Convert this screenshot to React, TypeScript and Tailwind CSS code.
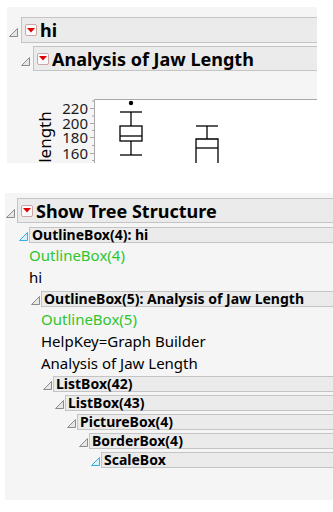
import React from "react";

const Tri = ({ blue }: { blue?: boolean }) => (
  <svg width="9" height="9" viewBox="0 0 9 9" className="shrink-0">
    <polygon
      points="8.5,0.5 8.5,8.5 0.5,8.5"
      fill={blue ? "#d9f2fd" : "#e6e6e6"}
      stroke={blue ? "#35aee2" : "#8c8c8c"}
      strokeWidth="1"
    />
  </svg>
);

const Menu = () => (
  <span className="w-[12px] h-[12px] border border-[#caa8a8] rounded-[2px] bg-[#fbfbfb] flex items-center justify-center shrink-0">
    <svg width="8" height="5" viewBox="0 0 8 5">
      <polygon points="0,0 8,0 4,4.6" fill="#e00000" />
    </svg>
  </span>
);

const TreeHeader = ({ indent, label, blue }: { indent: string; label: string; blue?: boolean }) => (
  <div className="flex items-center h-[16px]">
    <div className={`${indent} flex justify-end pr-[1px] pt-[3px]`}>
      <Tri blue={blue} />
    </div>
    <div className="flex-1 h-[16px] flex items-center bg-[#ebebeb] border border-r-0 border-[#c4c4c4] pl-[2px] font-bold text-[14px] text-black leading-[14px] whitespace-nowrap">
      {label}
    </div>
  </div>
);

const TextRow = ({ indent, children, green }: { indent: string; children: React.ReactNode; green?: boolean }) => (
  <div className={`${indent} h-[22px] flex items-center text-[15px] leading-none ${green ? "text-[#2ec52e]" : "text-black"}`}>
    {children}
  </div>
);

export default function App() {
  return (
    <div className="w-[333px] h-[512px] bg-white pt-[7px] font-['Noto_Sans','Open_Sans',sans-serif] overflow-hidden">
      {/* Top report */}
      <div className="ml-[7px] w-[310px] h-[156px] bg-[#f5f5f5] overflow-hidden pt-[10px]">
        <div className="flex items-center h-[26px]">
          <div className="w-[14px] flex justify-end pr-[3px] pt-[5px]">
            <Tri />
          </div>
          <div className="flex-1 h-[26px] flex items-center gap-[3px] bg-[#ebebeb] border border-r-0 border-[#c4c4c4] pl-[3px]">
            <Menu />
            <span className="font-bold text-[18px] leading-none text-black">hi</span>
          </div>
        </div>
        <div className="flex items-center h-[25px] mt-[3px]">
          <div className="w-[26px] flex justify-end pr-[3px] pt-[5px]">
            <Tri />
          </div>
          <div className="flex-1 h-[25px] flex items-center gap-[3px] bg-[#ebebeb] border border-r-0 border-[#c4c4c4] pl-[3px]">
            <Menu />
            <span className="font-bold text-[18px] leading-none text-black">Analysis of Jaw Length</span>
          </div>
        </div>
        {/* Chart */}
        <div className="relative h-[92px]">
          <div className="absolute left-[37px] top-[82px] w-0 h-0">
            <span className="absolute left-0 top-0 -translate-x-1/2 -translate-y-1/2 -rotate-90 text-[17px] leading-none text-black whitespace-nowrap">
              Jaw length
            </span>
          </div>
          {[
            ["220", 37],
            ["200", 52],
            ["180", 66],
            ["160", 82],
          ].map(([t, y]) => (
            <span
              key={t as string}
              className="absolute right-[229px] text-[15px] leading-[12px] text-[#1a1a1a]"
              style={{ top: (y as number) - 6 }}
            >
              {t}
            </span>
          ))}
          <svg className="absolute left-0 top-0" width="310" height="92" viewBox="0 0 310 92">
            <rect x="87.5" y="28.5" width="223" height="64" fill="#ffffff" />
            <line x1="87.5" y1="28.5" x2="310" y2="28.5" stroke="#a8a8a8" />
            <line x1="87.5" y1="28.5" x2="87.5" y2="92" stroke="#a8a8a8" />
            {[37, 52, 66, 82].map((y) => (
              <line key={y} x1="83" y1={y + 0.5} x2="87.5" y2={y + 0.5} stroke="#a8a8a8" />
            ))}
            {[29.5, 44.5, 59, 74, 89].map((y) => (
              <line key={y} x1="85" y1={y + 0.5} x2="87.5" y2={y + 0.5} stroke="#a8a8a8" />
            ))}
            <g stroke="#000" strokeWidth="1.3" fill="none">
              <circle cx="124" cy="32" r="2.2" fill="#000" stroke="none" />
              <line x1="113" y1="41" x2="135" y2="41" />
              <line x1="124" y1="41" x2="124" y2="55" />
              <rect x="113" y="55" width="22" height="15" />
              <line x1="113" y1="65" x2="135" y2="65" />
              <line x1="124" y1="70" x2="124" y2="84" />
              <line x1="113" y1="84" x2="135" y2="84" />
              <line x1="189" y1="55" x2="211" y2="55" />
              <line x1="200" y1="55" x2="200" y2="68" />
              <polyline points="189,95 189,68 211,68 211,95" />
              <line x1="189" y1="77" x2="211" y2="77" />
            </g>
          </svg>
        </div>
      </div>

      {/* Tree structure */}
      <div className="ml-[5px] mt-[30px] w-[328px] h-[307px] bg-[#f5f5f5] pt-[5px]">
        <div className="flex items-center h-[25px]">
          <div className="w-[12px] flex justify-end pr-[2px] pt-[5px]">
            <Tri />
          </div>
          <div className="flex-1 h-[25px] flex items-center gap-[3px] bg-[#ebebeb] border border-r-0 border-[#c4c4c4] pl-[3px]">
            <Menu />
            <span className="font-bold text-[18px] leading-none text-black">Show Tree Structure</span>
          </div>
        </div>
        <div className="mt-[4px]">
          <TreeHeader indent="w-[24px]" label="OutlineBox(4): hi" blue />
          <div className="h-px" />
          <TextRow indent="pl-[24px]" green>
            OutlineBox(4)
          </TextRow>
          <TextRow indent="pl-[24px]">hi</TextRow>
          <div className="h-[3px]" />
          <TreeHeader indent="w-[36px]" label="OutlineBox(5): Analysis of Jaw Length" />
          <div className="h-px" />
          <TextRow indent="pl-[36px]" green>
            OutlineBox(5)
          </TextRow>
          <TextRow indent="pl-[36px]">HelpKey=Graph Builder</TextRow>
          <TextRow indent="pl-[36px]">Analysis of Jaw Length</TextRow>
          <div className="flex flex-col gap-[3px] mt-[2px]">
            <TreeHeader indent="w-[48px]" label="ListBox(42)" />
            <TreeHeader indent="w-[60px]" label="ListBox(43)" />
            <TreeHeader indent="w-[72px]" label="PictureBox(4)" />
            <TreeHeader indent="w-[84px]" label="BorderBox(4)" />
            <TreeHeader indent="w-[96px]" label="ScaleBox" blue />
          </div>
        </div>
      </div>
    </div>
  );
}
